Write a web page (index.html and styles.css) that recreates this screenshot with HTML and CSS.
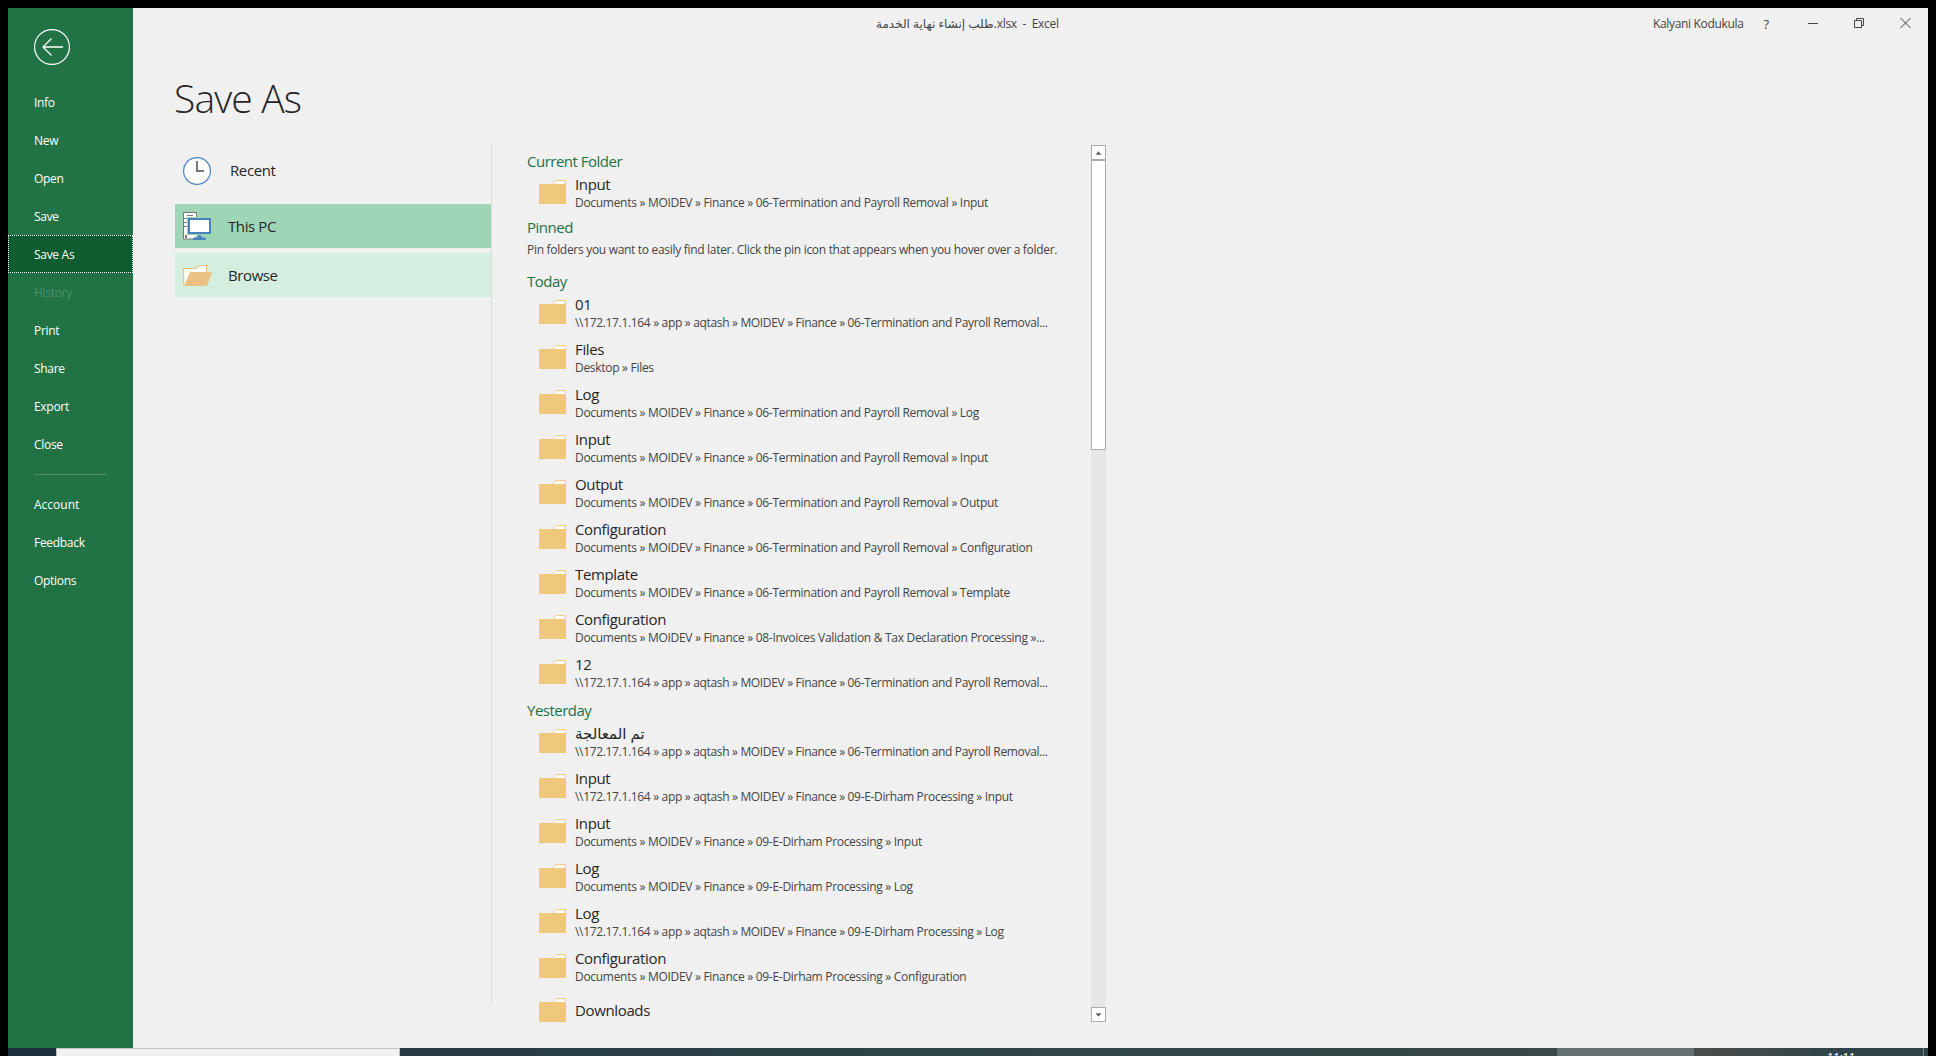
FILE: index.html
```html
<!DOCTYPE html>
<html lang="en">
<head>
<meta charset="utf-8">
<title>Save As - Excel</title>
<link rel="stylesheet" href="styles.css">
</head>
<body>
<svg class="defs" aria-hidden="true">
  <symbol id="folder" viewBox="0 0 27 24">
    <path d="M13.5 5 L17 .6 H26.4 V5" fill="#fff" stroke="#efc87e"/>
    <path d="M0 5 Q0 4 1 4 H27 V24 H0 Z" fill="#efc87e"/>
  </symbol>
</svg>
<div class="window">
  <nav class="sidebar">
    <svg class="back" viewBox="0 0 36 36"><g fill="none" stroke="#fff"><circle cx="18" cy="18" r="17.4" stroke-width="1.2"/><path d="M29 18H9M17.5 9.5L9 18l8.500 8.500" stroke-width="1.300"/></g></svg>
    <a class="nav">Info</a>
    <a class="nav">New</a>
    <a class="nav">Open</a>
    <a class="nav">Save</a>
    <a class="nav current">Save As</a>
    <a class="nav disabled">History</a>
    <a class="nav">Print</a>
    <a class="nav">Share</a>
    <a class="nav">Export</a>
    <a class="nav">Close</a>
    <hr class="rule">
    <a class="nav wide">Account</a>
    <a class="nav">Feedback</a>
    <a class="nav">Options</a>
  </nav>
  <main class="main">
    <header class="titlebar">
      <span class="doc">طلب إنشاء نهاية الخدمة<span class="latin">.xlsx&nbsp; -&nbsp; Excel</span></span>
      <span class="user">Kalyani Kodukula</span>
      <span class="help">?</span>
      <svg class="ctl" viewBox="0 0 112 12" fill="none" stroke="#444"><path d="M2 6.500h10"/><path d="M48.500 3.500h7v7h-7zM50.500 3.500v-2h7v7h-2"/><path d="M94.500 1l10 10m0-10l-10 10"/></svg>
    </header>
    <h1 class="title">Save As</h1>
    <div class="panes">
      <div class="places">
        <div class="place recent">
          <svg class="picon" viewBox="0 0 28 28"><circle cx="14" cy="14" r="13.400" fill="#fff" stroke="#4a82bd" stroke-width="1.200"/><path d="M14 4v10h7" fill="none" stroke="#777" stroke-width="2"/></svg>
          <span>Recent</span>
        </div>
        <div class="place selected">
          <svg class="picon" viewBox="0 0 28 28"><path d="M.5.5h13v26.500h-13z" fill="#fff" stroke="#777"/><path d="M4 3.500h6M0 6.500h5M0 10.500h5M0 14.500h5" stroke="#777" fill="none"/><path d="M2 23h2v3H2z" fill="#777"/><path d="M4 5h24v18h-5v5h-13v-2l3-2v-1H4z" fill="#9fd5b7"/><path d="M5 23h8l-3 3H5z" fill="#fff"/><path d="M6 7h21v14H6z" fill="#fff" stroke="#4a82bd" stroke-width="2"/><path d="M15 23h3v2l5 1v2H10v-2l5-1z" fill="#4a82bd"/></svg>
          <span>This PC</span>
        </div>
        <div class="place hover">
          <svg class="picon wide" viewBox="0 0 30 28"><path d="M.6 24V7.500H13L16 4.500h7.500V12" fill="#fff" stroke="#ebc283" stroke-width="1.200"/><path d="M7 11h22l-5 14H1z" fill="#ebc283"/></svg>
          <span>Browse</span>
        </div>
      </div>
      <div class="list">
        <h2 class="group">Current Folder</h2>
        <div class="row short"><svg class="folder"><use href="#folder"/></svg><div><p class="name">Input</p><p class="path">Documents » MOIDEV » Finance » 06-Termination and Payroll Removal » Input</p></div></div>
        <h2 class="group">Pinned</h2>
        <p class="hint">Pin folders you want to easily find later. Click the pin icon that appears when you hover over a folder.</p>
        <h2 class="group">Today</h2>
        <div class="row"><svg class="folder"><use href="#folder"/></svg><div><p class="name">01</p><p class="path net">\\172.17.1.164 » app » aqtash » MOIDEV » Finance » 06-Termination and Payroll Removal...</p></div></div>
        <div class="row"><svg class="folder"><use href="#folder"/></svg><div><p class="name">Files</p><p class="path">Desktop » Files</p></div></div>
        <div class="row"><svg class="folder"><use href="#folder"/></svg><div><p class="name">Log</p><p class="path">Documents » MOIDEV » Finance » 06-Termination and Payroll Removal » Log</p></div></div>
        <div class="row"><svg class="folder"><use href="#folder"/></svg><div><p class="name">Input</p><p class="path">Documents » MOIDEV » Finance » 06-Termination and Payroll Removal » Input</p></div></div>
        <div class="row"><svg class="folder"><use href="#folder"/></svg><div><p class="name">Output</p><p class="path">Documents » MOIDEV » Finance » 06-Termination and Payroll Removal » Output</p></div></div>
        <div class="row"><svg class="folder"><use href="#folder"/></svg><div><p class="name">Configuration</p><p class="path">Documents » MOIDEV » Finance » 06-Termination and Payroll Removal » Configuration</p></div></div>
        <div class="row"><svg class="folder"><use href="#folder"/></svg><div><p class="name">Template</p><p class="path">Documents » MOIDEV » Finance » 06-Termination and Payroll Removal » Template</p></div></div>
        <div class="row"><svg class="folder"><use href="#folder"/></svg><div><p class="name">Configuration</p><p class="path">Documents » MOIDEV » Finance » 08-Invoices Validation &amp; Tax Declaration Processing »...</p></div></div>
        <div class="row"><svg class="folder"><use href="#folder"/></svg><div><p class="name">12</p><p class="path net">\\172.17.1.164 » app » aqtash » MOIDEV » Finance » 06-Termination and Payroll Removal...</p></div></div>
        <h2 class="group">Yesterday</h2>
        <div class="row"><svg class="folder"><use href="#folder"/></svg><div><p class="name arabic">تم المعالجة</p><p class="path net">\\172.17.1.164 » app » aqtash » MOIDEV » Finance » 06-Termination and Payroll Removal...</p></div></div>
        <div class="row"><svg class="folder"><use href="#folder"/></svg><div><p class="name">Input</p><p class="path net">\\172.17.1.164 » app » aqtash » MOIDEV » Finance » 09-E-Dirham Processing » Input</p></div></div>
        <div class="row"><svg class="folder"><use href="#folder"/></svg><div><p class="name">Input</p><p class="path">Documents » MOIDEV » Finance » 09-E-Dirham Processing » Input</p></div></div>
        <div class="row"><svg class="folder"><use href="#folder"/></svg><div><p class="name">Log</p><p class="path">Documents » MOIDEV » Finance » 09-E-Dirham Processing » Log</p></div></div>
        <div class="row"><svg class="folder"><use href="#folder"/></svg><div><p class="name">Log</p><p class="path net">\\172.17.1.164 » app » aqtash » MOIDEV » Finance » 09-E-Dirham Processing » Log</p></div></div>
        <div class="row"><svg class="folder"><use href="#folder"/></svg><div><p class="name">Configuration</p><p class="path">Documents » MOIDEV » Finance » 09-E-Dirham Processing » Configuration</p></div></div>
        <div class="row single"><svg class="folder"><use href="#folder"/></svg><p class="name">Downloads</p></div>
      </div>
      <div class="scrollbar">
        <svg class="arrow" viewBox="0 0 15 15"><path d="M4 10L7.500 6 11 10z" fill="#666"/></svg>
        <div class="thumb"></div>
        <svg class="arrow end" viewBox="0 0 15 15"><path d="M4 6h7L7.500 10z" fill="#666"/></svg>
      </div>
    </div>
  </main>
</div>
<footer class="taskbar">
  <div class="search"></div>
  <div class="tray"></div>
  <div class="clock">11:11</div>
  <div class="desk"></div>
</footer>
</body>
</html>
```
FILE: styles.css
```css
* { box-sizing: border-box; margin: 0; padding: 0; }
body {
  width: 1936px; height: 1056px; overflow: hidden;
  padding: 8px 8px 0;
  display: flex; flex-direction: column;
  background: #000; color: #262626;
  font: 12px/16px "Open Sans", "Noto Sans", "DejaVu Sans", sans-serif;
  white-space: nowrap;
}
.defs { display: none; }
.window { display: flex; height: 1040px; flex: none; }
.sidebar { width: 125px; flex: none; background: #217346; display: flex; flex-direction: column; padding-top: 21px; }
.back { width: 36px; height: 36px; flex: none; margin: 0 0 18px 26px; }
.nav { height: 38px; flex: none; padding-left: 26px; line-height: 39px; color: #fff; letter-spacing: -.3px; }
.nav.wide { letter-spacing: 0; }
.current { background: #0e5c2f; outline: 1px dotted #fff; outline-offset: -1px; }
.disabled { color: #4d9168; }
.rule { border: 0; height: 1px; flex: none; width: 73px; margin: 11px 0 10px 26px; background: #4d9168; }
.main { flex: 1; background: #f0f0f0; display: flex; flex-direction: column; }
.titlebar { display: flex; height: 30px; line-height: 32px; color: #444; }
.doc { margin-left: 743px; width: 200px; }
.latin { letter-spacing: -.3px; }
.user { margin-left: 577px; letter-spacing: -.33px; }
.help { margin-left: 20px; font-size: 13px; }
.ctl { width: 112px; height: 12px; margin: 9px 0 0 37px; }
.title { margin: 33px 0 0 41px; height: 67px; font-size: 39px; line-height: 54px; font-weight: 300; letter-spacing: -.85px; }
.panes { display: flex; margin-left: 42px; height: 880px; }
.places { width: 317px; height: 862px; margin-top: 5px; border-right: 1px solid #dcdcdc; font-size: 15px; letter-spacing: -.4px; }
.place { display: flex; align-items: center; height: 44px; padding-left: 8px; gap: 17px; margin-bottom: 5px; }
.recent { height: 56px; gap: 19px; }
.recent span { padding-bottom: 2px; }
.selected { background: #9fd5b7; }
.hover { background: #d4efe0; }
.picon { width: 28px; height: 28px; flex: none; }
.picon.wide { width: 30px; margin-right: -2px; }
.list { width: 599px; height: 872px; margin-top: 12px; padding-left: 35px; overflow: hidden; }
.group { height: 24px; font-size: 15px; line-height: 22px; font-weight: 400; color: #217346; letter-spacing: -.5px; }
.row { display: flex; gap: 9px; height: 45px; padding-left: 12px; }
.row.short { height: 42px; }
.folder { width: 27px; height: 24px; margin-top: 6px; flex: none; }
.name { font-size: 15px; line-height: 20px; letter-spacing: -.36px; }
.name.arabic { letter-spacing: 0; }
.path, .hint { color: #444; letter-spacing: -.295px; }
.path { padding-top: 1px; }
.path.net { letter-spacing: -.33px; }
.hint { height: 30px; line-height: 20px; letter-spacing: -.305px; }
.single .folder { margin-top: 5px; }
.single .name { line-height: 34px; }
.scrollbar { width: 15px; height: 877px; margin-top: 7px; background: #e6e6e6; display: flex; flex-direction: column; }
.arrow { width: 15px; height: 15px; background: #fff; border: 1px solid #ababab; }
.thumb { height: 290px; background: #fff; border: 1px solid #ababab; }
.end { margin-top: auto; }
.taskbar { height: 8px; flex: none; display: flex; overflow: hidden; background: linear-gradient(90deg, #1c2d3c 0, #263b44 400px, #2c4447 900px, #384747 1500px, #484c4c 1700px, #2d4347 1850px); }
.search { width: 344px; height: 12px; margin-left: 48px; background: #f0f0f0; border: 1px solid #bfbfbf; }
.tray { width: 137px; margin-left: 1157px; background: #657070; }
.clock { width: 229px; padding: 2px 0 0 133px; color: #fff; letter-spacing: -.5px; }
.desk { width: 1px; background: #75868a; }
```
